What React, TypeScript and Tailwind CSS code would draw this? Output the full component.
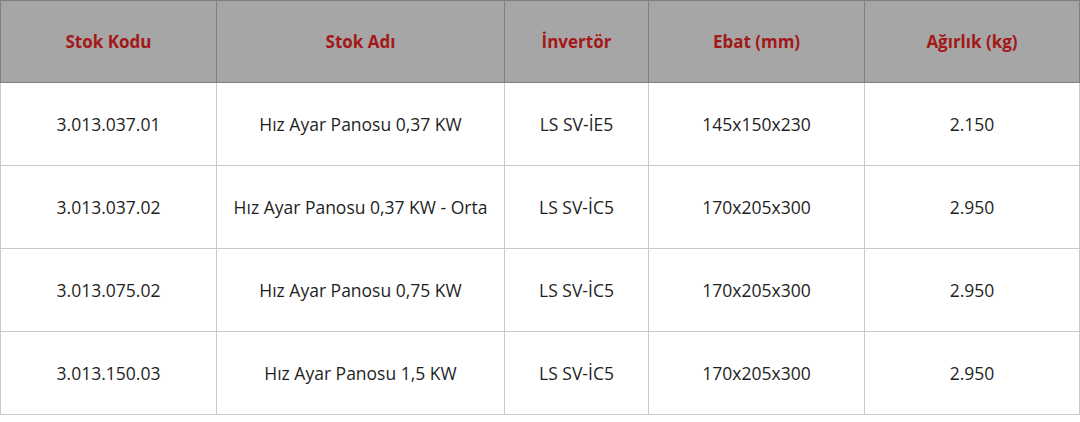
import React from 'react';

type Row = {
  code: string;
  name: string;
  inverter: string;
  size: string;
  weight: string;
};

const headers = ['Stok Kodu', 'Stok Adı', 'İnvertör', 'Ebat (mm)', 'Ağırlık (kg)'];

const rows: Row[] = [
  { code: '3.013.037.01', name: 'Hız Ayar Panosu 0,37 KW', inverter: 'LS SV-İE5', size: '145x150x230', weight: '2.150' },
  { code: '3.013.037.02', name: 'Hız Ayar Panosu 0,37 KW - Orta', inverter: 'LS SV-İC5', size: '170x205x300', weight: '2.950' },
  { code: '3.013.075.02', name: 'Hız Ayar Panosu 0,75 KW', inverter: 'LS SV-İC5', size: '170x205x300', weight: '2.950' },
  { code: '3.013.150.03', name: 'Hız Ayar Panosu 1,5 KW', inverter: 'LS SV-İC5', size: '170x205x300', weight: '2.950' },
];

const cols = 'grid grid-cols-[217px_288px_144px_216px_215px]';

const App = () => {
  return (
    <div className="w-[1080px] bg-white font-['Open_Sans',sans-serif]">
      <div className={`${cols} h-[83px] bg-[#a6a6a6] border-t border-b border-[#7f7f7f]`}>
        {headers.map((h, i) => (
          <div
            key={h}
            className={`flex items-center justify-center text-[17px] font-bold text-[#a31818] border-r border-[#808080] ${i === 0 ? 'border-l' : ''}`}
          >
            {h}
          </div>
        ))}
      </div>
      {rows.map((r) => (
        <div key={r.code} className={`${cols} h-[83px] border-b border-[#c9c9c9] text-[17.5px] text-[#1f1f1f]`}>
          <div className="flex items-center justify-center border-l border-r border-[#c9c9c9]">{r.code}</div>
          <div className="flex items-center justify-center border-r border-[#c9c9c9]">{r.name}</div>
          <div className="flex items-center justify-center border-r border-[#c9c9c9]">{r.inverter}</div>
          <div className="flex items-center justify-center border-r border-[#c9c9c9]">{r.size}</div>
          <div className="flex items-center justify-center border-r border-[#c9c9c9]">{r.weight}</div>
        </div>
      ))}
    </div>
  );
};

export default App;
